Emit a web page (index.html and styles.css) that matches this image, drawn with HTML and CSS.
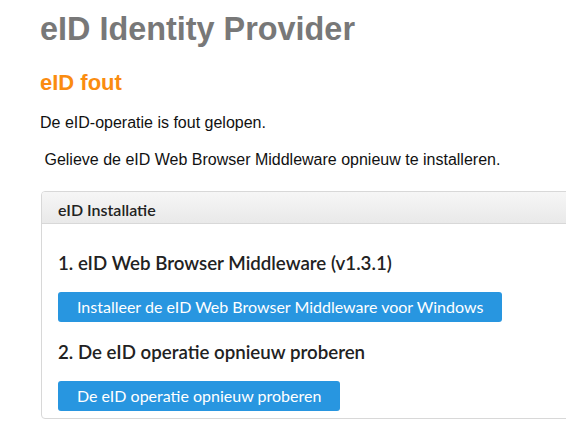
FILE: index.html
```html
<!DOCTYPE html>
<html lang="nl">
<head>
<meta charset="utf-8">
<title>eID Identity Provider</title>
<link rel="stylesheet" href="styles.css">
</head>
<body>
<div class="page">
  <h1 class="title">eID Identity Provider</h1>
  <h2 class="error-title">eID fout</h2>
  <p class="msg">De eID-operatie is fout gelopen.</p>
  <p class="msg msg-2"> Gelieve de eID Web Browser Middleware opnieuw te installeren.</p>
  <div class="panel">
    <div class="panel-heading">eID Installatie</div>
    <div class="panel-body">
      <h3 class="step">1. eID Web Browser Middleware (v1.3.1)</h3>
      <a class="btn" href="#">Installeer de eID Web Browser Middleware voor Windows</a>
      <h3 class="step">2. De eID operatie opnieuw proberen</h3>
      <a class="btn" href="#">De eID operatie opnieuw proberen</a>
    </div>
  </div>
</div>
</body>
</html>
```
FILE: styles.css
```css
html, body {
  margin: 0;
  padding: 0;
  background: #fff;
  overflow: hidden;
}
.page {
  padding: 12px 0 0 40px;
  font-family: "Liberation Sans", Arial, sans-serif;
}
.title {
  margin: 0;
  font-size: 32.4px;
  line-height: 35px;
  font-weight: bold;
  color: #787878;
}
.error-title {
  margin: 24px 0 0;
  font-size: 22px;
  line-height: 24px;
  font-weight: bold;
  color: #fa8c10;
}
.msg {
  margin: 18px 0 0;
  font-size: 16px;
  line-height: 20px;
  color: #111;
  white-space: pre;
}
.msg-2 {
  margin-top: 17px;
}
.panel {
  margin-top: 21px;
  margin-left: 1px;
  width: 600px;
  border: 1px solid #d8d8d8;
  border-radius: 4px;
  font-family: Lato, "Liberation Sans", sans-serif;
}
.panel-heading {
  padding: 8px 16px 3px;
  font-size: 16px;
  line-height: 20px;
  font-weight: 600;
  color: #222;
  background: linear-gradient(#f6f6f6, #e9e9e9);
  border-bottom: 1px solid #d8d8d8;
  border-radius: 3px 3px 0 0;
}
.panel-body {
  padding: 9px 16px 7px;
}
.step {
  margin: 20px 0 19px;
  font-size: 18.7px;
  line-height: 20px;
  font-weight: 600;
  color: #222;
}
.btn {
  display: inline-block;
  padding: 5px 19px;
  font-size: 16px;
  line-height: 20px;
  color: #fff;
  background: #2896e0;
  border-radius: 3px;
  text-decoration: none;
}
```
